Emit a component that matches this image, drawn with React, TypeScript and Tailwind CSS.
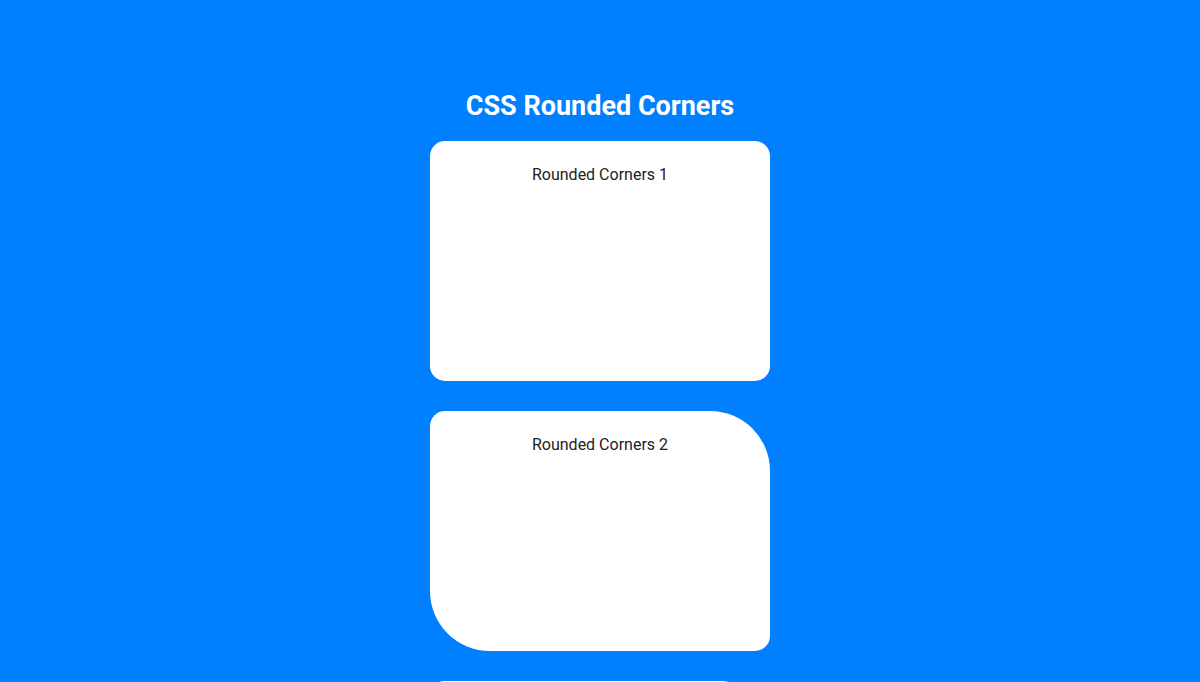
import React from "react";

const cards = [
  { label: "Rounded Corners 1", shape: "rounded-[15px]" },
  { label: "Rounded Corners 2", shape: "rounded-tl-[15px] rounded-tr-[60px] rounded-br-[15px] rounded-bl-[60px]" },
  { label: "Rounded Corners 3", shape: "rounded-tl-[15px] rounded-tr-[50px] rounded-br-[15px] rounded-bl-[50px]" },
];

export default function App() {
  return (
    <div className="min-h-screen bg-[#0080ff] font-['Roboto',sans-serif] flex flex-col items-center pt-[91px] pb-10">
      <h1 className="text-[27px] font-bold text-white leading-[30px] mb-[20px]">CSS Rounded Corners</h1>
      <div className="flex flex-col gap-[30px]">
        {cards.map((c) => (
          <div key={c.label} className={`w-[340px] h-[240px] bg-white px-5 pt-[21px] text-center text-base leading-[1.6] text-[#222] ${c.shape}`}>
            {c.label}
          </div>
        ))}
      </div>
    </div>
  );
}
